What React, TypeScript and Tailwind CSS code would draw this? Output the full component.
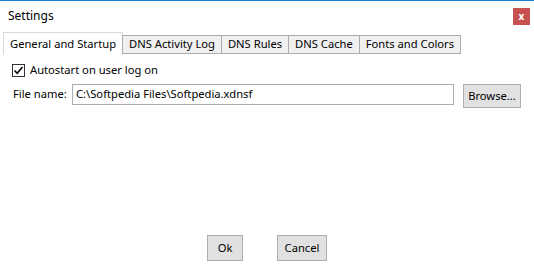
const tabs = ['General and Startup', 'DNS Activity Log', 'DNS Rules', 'DNS Cache', 'Fonts and Colors']

export default function App() {
  return (
    <div
      className="w-[534px] h-[272px] bg-white border-t border-[#1883d7] flex flex-col text-[11.2px] text-black"
      style={{ fontFamily: '"Segoe UI", "Noto Sans", "Open Sans", sans-serif' }}
    >
      {/* title bar */}
      <div className="h-[30px] flex items-center pl-[8px] pr-[4px]">
        <div className="text-[12px]">Settings</div>
        <div className="ml-auto w-[17px] h-[17px] bg-[#c75050] flex items-center justify-center text-white text-[10px] font-bold leading-none">
          x
        </div>
      </div>

      {/* tabs */}
      <div className="flex items-end pl-[3px] h-[24px]">
        {tabs.map((t, i) => (
          <div
            key={t}
            className={
              i === 0
                ? 'h-[23px] px-[6px] flex items-center border border-b-0 border-[#d9d9d9] bg-white'
                : 'h-[19px] px-[6px] flex items-center border border-[#acacac] bg-[#f0f0f0] -ml-px first:ml-0 mb-px'
            }
          >
            {t}
          </div>
        ))}
      </div>

      {/* content */}
      <div className="flex flex-col pl-[12px] pt-[7px] pr-[12px]">
        <label className="flex items-center gap-[5px] h-[16px]">
          <span className="w-[13px] h-[13px] border border-[#333] flex items-center justify-center">
            <svg width="11" height="11" viewBox="0 0 11 11">
              <path d="M1.5 5.5 L4.2 8.2 L9.5 2" stroke="#000" strokeWidth="1.6" fill="none" />
            </svg>
          </span>
          <span>Autostart on user log on</span>
        </label>

        <div className="flex items-start mt-[6px]">
          <span className="w-[60px] pl-[1px] h-[21px] flex items-center">File name:</span>
          <div className="w-[382px] h-[21px] border border-[#abadb3] flex items-center px-[3px]">
            C:\Softpedia Files\Softpedia.xdnsf
          </div>
          <button className="ml-[9px] w-[58px] h-[24px] bg-[#e1e1e1] border border-[#adadad] flex items-center justify-center">
            Browse...
          </button>
        </div>
      </div>

      <div className="mt-auto mb-[11px] flex justify-center gap-[34px]">
        <button className="w-[36px] h-[26px] bg-[#e1e1e1] border border-[#adadad] flex items-center justify-center">
          Ok
        </button>
        <button className="w-[50px] h-[26px] bg-[#e1e1e1] border border-[#adadad] flex items-center justify-center">
          Cancel
        </button>
      </div>
    </div>
  )
}
